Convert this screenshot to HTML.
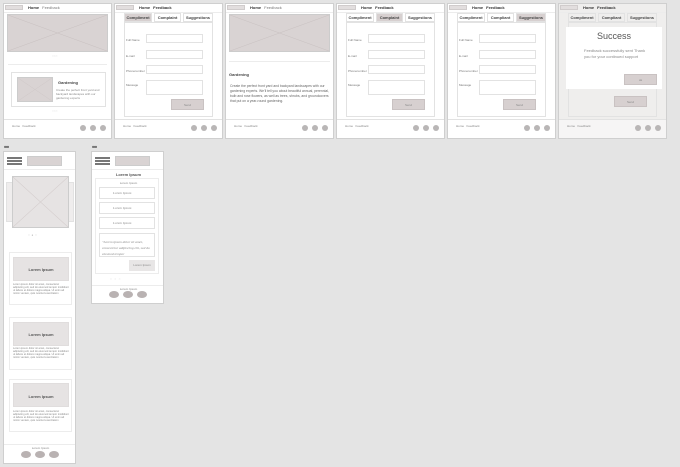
<!DOCTYPE html><html><head><style>
*{margin:0;padding:0;box-sizing:border-box}
body{width:680px;height:467px;background:#e4e4e4;position:relative;overflow:hidden;font-family:"Liberation Sans",sans-serif;color:#555}
.f{position:absolute;top:3px;width:109px;height:136px;background:#fff;border:1px solid #cfcfcf}
.a{position:absolute}
.logo{position:absolute;left:1px;top:1px;width:18px;height:5px;background:#e2dede;border:1px solid #d0cccc}
.nav{position:absolute;left:24px;top:1px;font-size:4px;line-height:5px;color:#333;font-weight:bold}
.nav span{font-weight:normal;color:#777;margin-left:3px}
.hl{position:absolute;left:0;right:0;top:8px;border-top:1px solid #ececec}
.fl{position:absolute;left:0;right:0;top:115px;border-top:1px solid #e2e2e2}
.ft{position:absolute;left:8px;top:120px;font-size:3px;color:#888}
.c{position:absolute;top:121px;width:6px;height:6px;border-radius:50%;background:#b9b6b6}
.img{position:absolute;background:#d9d3d3;border:1px solid #ccc}
.img svg{position:absolute;left:0;top:0;width:100%;height:100%}
.tab{position:absolute;top:9px;height:9px;border:1px solid #e2e2e2;font-size:4px;line-height:8px;text-align:center;color:#444;font-weight:bold;background:#fff}
.tab.s{background:#d7d0d0}
.pn{position:absolute;left:9px;top:18px;width:89px;height:95px;border:1px solid #e2e2e2}
.lb{position:absolute;left:11px;font-size:3px;color:#777}
.in{position:absolute;left:31px;width:57px;border:1px solid #e2e2e2;height:9px}
.btn{position:absolute;background:#d7d0d0;border:1px solid #c9c2c2;font-size:3px;color:#888;text-align:center;line-height:10px}
.m{position:absolute;background:#fff;border:1px solid #cfcfcf}
.t{font-size:3px;line-height:4px;color:#888}
</style></head><body>

<!-- frame 1 -->
<div class="f" style="left:3px">
<div class="logo"></div><div class="nav">Home<span>Feedback</span></div><div class="hl"></div>
<div class="img" style="left:3px;top:10px;width:101px;height:38px"><svg preserveAspectRatio="none" viewBox="0 0 10 10"><path d="M0 0L10 10M10 0L0 10" stroke="#c8c0c0" stroke-width=".1"/></svg></div>
<div class="a t" style="left:48px;top:50px;color:#ccc">○○○</div>
<div class="a" style="left:4px;right:4px;top:60px;border-top:1px solid #ececec"></div>
<div class="a" style="left:7px;top:68px;width:95px;height:35px;border:1px solid #e2e2e2"></div>
<div class="img" style="left:13px;top:73px;width:36px;height:25px"><svg preserveAspectRatio="none" viewBox="0 0 10 10"><path d="M0 0L10 10M10 0L0 10" stroke="#c8c0c0" stroke-width=".1"/></svg></div>
<div class="a" style="left:54px;top:76px;font-size:4px;font-weight:bold;color:#444">Gardening</div>
<div class="a t" style="left:52px;top:84px;width:50px">Create the perfect front yard and backyard landscapes with our gardening experts</div>
<div class="a t" style="left:48px;top:105px;color:#ccc">○○○</div>
<div class="fl"></div><div class="ft">Home &nbsp; Feedback</div>
<div class="c" style="left:76px"></div><div class="c" style="left:86px"></div><div class="c" style="left:96px"></div>
</div>

<!-- frame 2 -->
<div class="f" style="left:114px">
<div class="logo"></div><div class="nav">Home<span style="font-weight:bold;color:#333">Feedback</span></div><div class="hl"></div>
<div class="tab s" style="left:9px;width:28px">Compliment</div><div class="tab" style="left:39px;width:27px">Complaint</div><div class="tab" style="left:68px;width:30px">Suggestions</div>
<div class="pn"></div>
<div class="lb" style="top:34px">Full Name</div><div class="in" style="top:30px"></div>
<div class="lb" style="top:50px">E-mail</div><div class="in" style="top:46px"></div>
<div class="lb" style="top:65px">Phonenumber</div><div class="in" style="top:61px"></div>
<div class="lb" style="top:79px">Message</div><div class="in" style="top:76px;height:15px"></div>
<div class="btn" style="left:56px;top:95px;width:33px;height:11px">Send</div>
<div class="fl"></div><div class="ft">Home &nbsp; Feedback</div>
<div class="c" style="left:76px"></div><div class="c" style="left:86px"></div><div class="c" style="left:96px"></div>
</div>

<!-- frame 3 -->
<div class="f" style="left:225px">
<div class="logo"></div><div class="nav">Home<span>Feedback</span></div><div class="hl"></div>
<div class="img" style="left:3px;top:10px;width:101px;height:38px"><svg preserveAspectRatio="none" viewBox="0 0 10 10"><path d="M0 0L10 10M10 0L0 10" stroke="#c8c0c0" stroke-width=".1"/></svg></div>
<div class="a" style="left:3px;right:3px;top:57px;border-top:1px solid #ececec"></div>
<div class="a" style="left:3px;top:68px;font-size:4px;font-weight:bold;color:#444">Gardening</div>
<div class="a" style="left:4px;top:80px;width:100px;font-size:3.4px;line-height:5px;color:#666">Create the perfect front yard and backyard landscapes with our gardening experts. We'll tell you about beautiful annual, perennial, bulb and rose flowers, as well as trees, shrubs, and groundcovers that put on a year-round gardening.</div>
<div class="fl"></div><div class="ft">Home &nbsp; Feedback</div>
<div class="c" style="left:76px"></div><div class="c" style="left:86px"></div><div class="c" style="left:96px"></div>
</div>

<!-- frame 4 -->
<div class="f" style="left:336px">
<div class="logo"></div><div class="nav">Home<span style="font-weight:bold;color:#333">Feedback</span></div><div class="hl"></div>
<div class="tab" style="left:9px;width:28px">Compliment</div><div class="tab s" style="left:39px;width:27px">Complaint</div><div class="tab" style="left:68px;width:30px">Suggestions</div>
<div class="pn"></div>
<div class="lb" style="top:34px">Full Name</div><div class="in" style="top:30px"></div>
<div class="lb" style="top:50px">E-mail</div><div class="in" style="top:46px"></div>
<div class="lb" style="top:65px">Phonenumber</div><div class="in" style="top:61px"></div>
<div class="lb" style="top:79px">Message</div><div class="in" style="top:76px;height:15px"></div>
<div class="btn" style="left:55px;top:95px;width:33px;height:11px">Send</div>
<div class="fl"></div><div class="ft">Home &nbsp; Feedback</div>
<div class="c" style="left:76px"></div><div class="c" style="left:86px"></div><div class="c" style="left:96px"></div>
</div>

<!-- frame 5 -->
<div class="f" style="left:447px">
<div class="logo"></div><div class="nav">Home<span style="font-weight:bold;color:#333">Feedback</span></div><div class="hl"></div>
<div class="tab" style="left:9px;width:28px">Compliment</div><div class="tab" style="left:39px;width:27px">Compliant</div><div class="tab s" style="left:68px;width:30px">Suggestions</div>
<div class="pn"></div>
<div class="lb" style="top:34px">Full Name</div><div class="in" style="top:30px"></div>
<div class="lb" style="top:50px">E-mail</div><div class="in" style="top:46px"></div>
<div class="lb" style="top:65px">Phonenumber</div><div class="in" style="top:61px"></div>
<div class="lb" style="top:79px">Message</div><div class="in" style="top:76px;height:15px"></div>
<div class="btn" style="left:55px;top:95px;width:33px;height:11px">Send</div>
<div class="fl"></div><div class="ft">Home &nbsp; Feedback</div>
<div class="c" style="left:76px"></div><div class="c" style="left:86px"></div><div class="c" style="left:96px"></div>
</div>

<!-- frame 6 -->
<div class="f" style="left:558px;background:#f6f5f5">
<div class="a" style="left:0;right:0;top:0;height:116px;background:#efeeed"></div>
<div class="logo"></div><div class="nav">Home<span style="font-weight:bold;color:#333">Feedback</span></div><div class="hl"></div>
<div class="tab" style="left:9px;width:28px;background:#efeeed">Compliment</div><div class="tab" style="left:39px;width:27px;background:#efeeed">Compliant</div><div class="tab" style="left:68px;width:30px;background:#efeeed">Suggestions</div>
<div class="pn"></div>
<div class="btn" style="left:55px;top:92px;width:33px;height:11px">Send</div>
<div class="a" style="left:7px;top:23px;width:96px;height:62px;background:#fff"></div>
<div class="a" style="left:7px;top:27px;width:96px;text-align:center;font-size:9px;color:#555">Success</div>
<div class="a" style="left:25px;top:44px;width:62px;font-size:4px;line-height:6px;color:#888">Feedback successfully sent Thank you for your continued support</div>
<div class="btn" style="left:65px;top:70px;width:33px;height:11px">ok</div>
<div class="fl"></div><div class="ft">Home &nbsp; Feedback</div>
<div class="c" style="left:76px"></div><div class="c" style="left:86px"></div><div class="c" style="left:96px"></div>
</div>

<!-- mobile 1 -->
<div class="a" style="left:4px;top:144px;font-size:4px;color:#777;letter-spacing:-1px">■■■</div>
<div class="m" style="left:3px;top:151px;width:73px;height:313px">
<div class="a" style="left:3px;top:5px;width:15px;height:2px;background:#777;box-shadow:0 3px #777,0 6px #777"></div>
<div class="img" style="left:23px;top:4px;width:35px;height:10px"></div>
<div class="a" style="left:0;right:0;top:17px;border-top:1px solid #ececec"></div>
<div class="img" style="left:2px;top:30px;width:68px;height:40px;background:#efeded;border-color:#e2e2e2"></div>
<div class="img" style="left:8px;top:24px;width:57px;height:52px;background:#e6e3e3"><svg preserveAspectRatio="none" viewBox="0 0 10 10"><path d="M0 0L10 10M10 0L0 10" stroke="#d3cccc" stroke-width=".1"/></svg></div>
<div class="a t" style="left:24px;top:81px;color:#bbb">○ &nbsp;● &nbsp;○</div>
<div class="a" style="left:5px;top:100px;width:63px;height:53px;border:1px solid #ececec"></div>
<div class="img" style="left:9px;top:105px;width:56px;height:24px;background:#e6e3e3;border-color:#e0dddd"></div>
<div class="a" style="left:9px;top:115px;width:56px;text-align:center;font-size:4px;font-weight:bold;color:#555">Lorem Ipsum</div>
<div class="a t" style="left:9px;top:131px;width:56px;font-size:2.6px;line-height:3px">Lorem ipsum dolor sit amet, consectetur adipiscing elit, sed do eiusmod tempor incididunt ut labore et dolore magna aliqua. Ut enim ad minim veniam, quis nostrud exercitation</div>
<div class="a" style="left:5px;top:165px;width:63px;height:53px;border:1px solid #ececec"></div>
<div class="img" style="left:9px;top:170px;width:56px;height:24px;background:#e6e3e3;border-color:#e0dddd"></div>
<div class="a" style="left:9px;top:180px;width:56px;text-align:center;font-size:4px;font-weight:bold;color:#555">Lorem Ipsum</div>
<div class="a t" style="left:9px;top:195px;width:56px;font-size:2.6px;line-height:3px">Lorem ipsum dolor sit amet, consectetur adipiscing elit, sed do eiusmod tempor incididunt ut labore et dolore magna aliqua. Ut enim ad minim veniam, quis nostrud exercitation</div>
<div class="a" style="left:5px;top:227px;width:63px;height:53px;border:1px solid #ececec"></div>
<div class="img" style="left:9px;top:231px;width:56px;height:24px;background:#e6e3e3;border-color:#e0dddd"></div>
<div class="a" style="left:9px;top:242px;width:56px;text-align:center;font-size:4px;font-weight:bold;color:#555">Lorem Ipsum</div>
<div class="a t" style="left:9px;top:258px;width:56px;font-size:2.6px;line-height:3px">Lorem ipsum dolor sit amet, consectetur adipiscing elit, sed do eiusmod tempor incididunt ut labore et dolore magna aliqua. Ut enim ad minim veniam, quis nostrud exercitation</div>
<div class="a" style="left:0;right:0;top:292px;border-top:1px solid #ececec"></div>
<div class="a t" style="left:0;width:73px;top:294px;text-align:center;font-size:3px">Lorem Ipsum</div>
<div class="a" style="left:17px;top:299px;width:10px;height:7px;border-radius:50%;background:#b9b2b2"></div>
<div class="a" style="left:31px;top:299px;width:10px;height:7px;border-radius:50%;background:#b9b2b2"></div>
<div class="a" style="left:45px;top:299px;width:10px;height:7px;border-radius:50%;background:#b9b2b2"></div>
</div>

<!-- mobile 2 -->
<div class="a" style="left:92px;top:144px;font-size:4px;color:#777;letter-spacing:-1px">■■■</div>
<div class="m" style="left:91px;top:151px;width:73px;height:153px">
<div class="a" style="left:3px;top:5px;width:15px;height:2px;background:#777;box-shadow:0 3px #777,0 6px #777"></div>
<div class="img" style="left:23px;top:4px;width:35px;height:10px"></div>
<div class="a" style="left:0;right:0;top:17px;border-top:1px solid #ececec"></div>
<div class="a" style="left:0;width:73px;top:20px;text-align:center;font-size:4px;font-weight:bold;color:#555">Lorem Ipsum</div>
<div class="a" style="left:3px;top:26px;width:64px;height:96px;border:1px solid #ececec"></div>
<div class="a t" style="left:0;width:73px;top:29px;text-align:center;font-size:3px">Lorem Ipsum</div>
<div class="a" style="left:7px;top:35px;width:56px;height:12px;border:1px solid #e2e2e2;font-size:3.5px;font-style:italic;line-height:10px;padding-left:13px;color:#888;font-family:'Liberation Serif',serif">Lorem Ipsum</div>
<div class="a" style="left:7px;top:50px;width:56px;height:12px;border:1px solid #e2e2e2;font-size:3.5px;font-style:italic;line-height:10px;padding-left:13px;color:#888;font-family:'Liberation Serif',serif">Lorem Ipsum</div>
<div class="a" style="left:7px;top:65px;width:56px;height:12px;border:1px solid #e2e2e2;font-size:3.5px;font-style:italic;line-height:10px;padding-left:13px;color:#888;font-family:'Liberation Serif',serif">Lorem Ipsum</div>
<div class="a" style="left:7px;top:81px;width:56px;height:24px;border:1px solid #e2e2e2;font-size:3.5px;font-style:italic;line-height:6px;padding:5px 2px;color:#888;font-family:'Liberation Serif',serif">"Lorem ipsum dolor sit amet, consectetur adipiscing elit, sed do eiusmod tempor</div>
<div class="a" style="left:37px;top:108px;width:26px;height:11px;background:#e8e6e6;font-size:3px;line-height:11px;text-align:center;color:#888">Lorem Ipsum</div>
<div class="a t" style="left:18px;top:125px;color:#ccc">○ &nbsp; ○ &nbsp; ○</div>
<div class="a" style="left:0;right:0;top:133px;border-top:1px solid #ececec"></div>
<div class="a t" style="left:0;width:73px;top:135px;text-align:center;font-size:3px">Lorem Ipsum</div>
<div class="a" style="left:17px;top:139px;width:10px;height:7px;border-radius:50%;background:#b9b2b2"></div>
<div class="a" style="left:31px;top:139px;width:10px;height:7px;border-radius:50%;background:#b9b2b2"></div>
<div class="a" style="left:45px;top:139px;width:10px;height:7px;border-radius:50%;background:#b9b2b2"></div>
</div>
</body></html>
